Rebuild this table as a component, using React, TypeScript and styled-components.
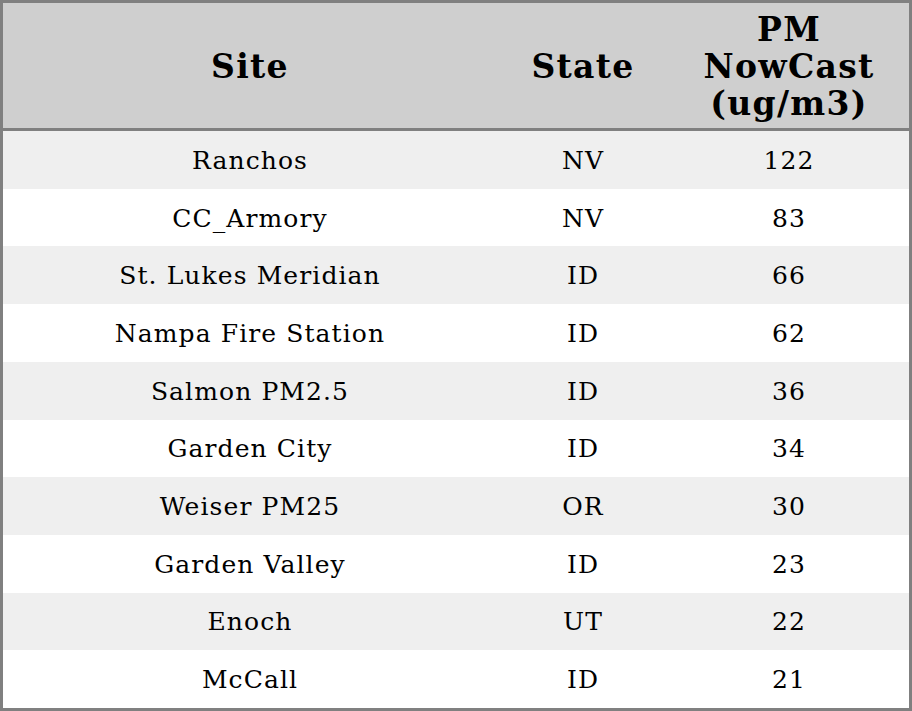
import React from "react";
import styled, { createGlobalStyle } from "styled-components";

const Global = createGlobalStyle`
  html, body { margin: 0; padding: 0; background: #fff; }
  #root { height: 100vh; }
`;

const Table = styled.div`
  box-sizing: border-box;
  width: 912px;
  height: 711px;
  border: 3px solid #808080;
  display: flex;
  flex-direction: column;
  font-family: "DejaVu Serif", serif;
  color: #000;
`;

const Row = styled.div<{ $head?: boolean; $alt?: boolean }>`
  display: grid;
  grid-template-columns: 494px 172px 1fr;
  align-items: center;
  text-align: center;
  ${(p) =>
    p.$head
      ? `
    height: 128px;
    flex: none;
    box-sizing: border-box;
    border-bottom: 3px solid #808080;
    background: #cfcfcf;
    font-weight: bold;
    font-size: 33px;
    letter-spacing: 1.3px;
  `
      : `
    flex: 1;
    background: ${p.$alt ? "#efefef" : "#ffffff"};
    font-size: 25px;
    letter-spacing: 1.1px;
  `}
`;

const HeadCell = styled.div`
  padding: 0 10px;
  line-height: 37px;
  padding-top: 2px;
`;

const Cell = styled.div`
  line-height: 28px;
  padding-top: 2px;
`;

const data: [string, string, number][] = [
  ["Ranchos", "NV", 122],
  ["CC_Armory", "NV", 83],
  ["St. Lukes Meridian", "ID", 66],
  ["Nampa Fire Station", "ID", 62],
  ["Salmon PM2.5", "ID", 36],
  ["Garden City", "ID", 34],
  ["Weiser PM25", "OR", 30],
  ["Garden Valley", "ID", 23],
  ["Enoch", "UT", 22],
  ["McCall", "ID", 21],
];

export default function App() {
  return (
    <>
      <Global />
      <Table>
        <Row $head>
          <HeadCell>Site</HeadCell>
          <HeadCell>State</HeadCell>
          <HeadCell>
            PM
            <br />
            NowCast
            <br />
            (ug/m3)
          </HeadCell>
        </Row>
        {data.map(([site, st, v], i) => (
          <Row key={site} $alt={i % 2 === 0}>
            <Cell>{site}</Cell>
            <Cell>{st}</Cell>
            <Cell>{v}</Cell>
          </Row>
        ))}
      </Table>
    </>
  );
}
